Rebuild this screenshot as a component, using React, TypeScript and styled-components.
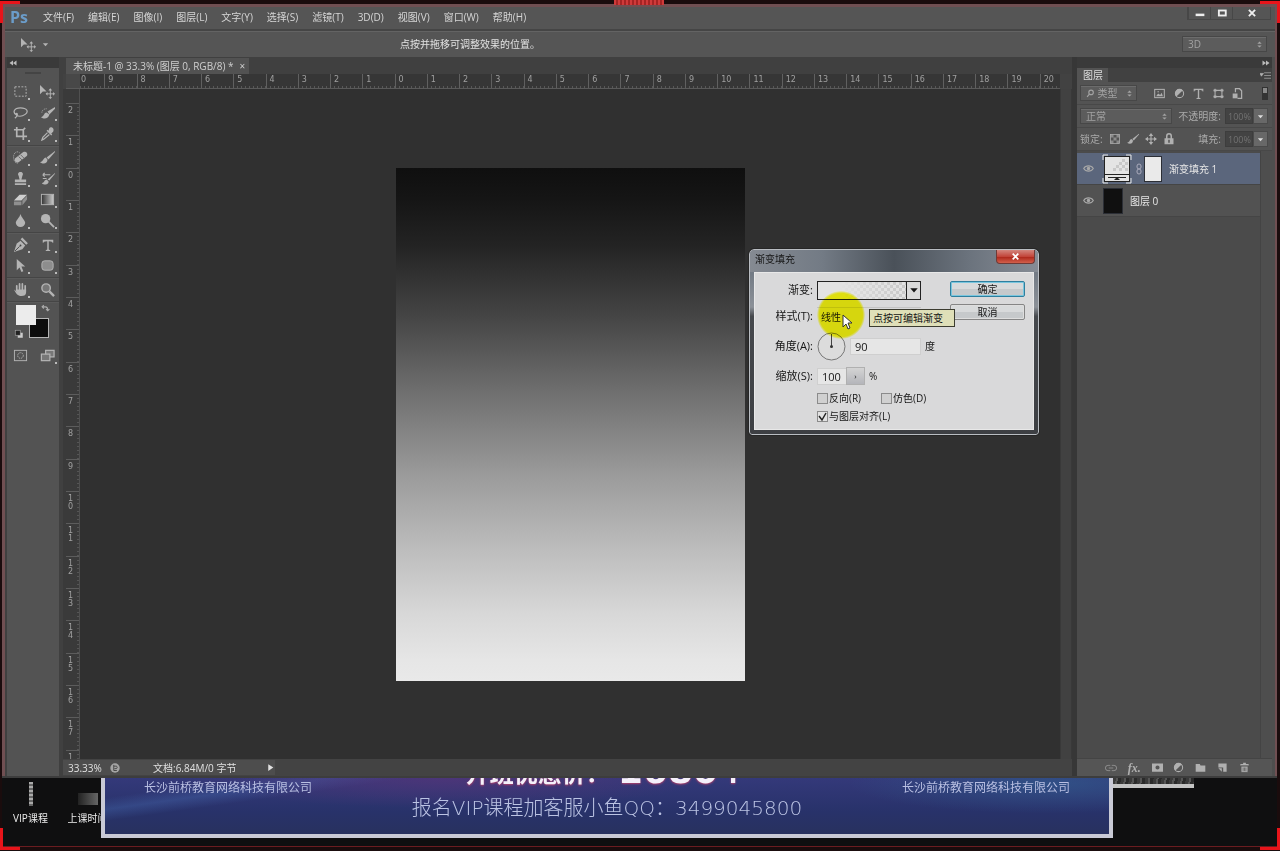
import React from "react";
import styled, { createGlobalStyle } from "styled-components";

const Global = createGlobalStyle`
  *, *::before, *::after { box-sizing: border-box; }
  body { margin: 0; background: #111; }
  button, input, select { font: inherit; color: inherit; margin: 0; padding: 0; border: 0; background: none; border-radius: 0; }
  select { appearance: none; }
  ul { list-style: none; margin: 0; padding: 0; }
  svg { display: block; flex: none; }
`;

/* ---------- frame and application window ---------- */

const Screen = styled.div`
  position: relative;
  display: flex;
  flex-direction: column;
  min-height: 100vh;
  padding: 4px 3px 4px 2px;
  background: #1a0c0d;
  overflow: hidden;
  color: #d6d6d6;
  font: 10px/16px "Open Sans", "Noto Sans CJK SC", sans-serif;
`;

const Corner = styled.span<{ $v: "top" | "bottom"; $h: "left" | "right" }>`
  position: absolute;
  ${(p) => p.$v}: 1px;
  ${(p) => p.$h}: 0;
  width: 20px;
  height: 22px;
  border: 0 solid #e8141a;
  border-${(p) => p.$v}-width: 3px;
  border-${(p) => p.$h}-width: 3px;
  z-index: 5;
`;

const FrameGrip = styled.span`
  position: absolute;
  top: 0;
  left: 48%;
  width: 50px;
  height: 5px;
  background: repeating-linear-gradient(90deg, #cf3a3a 0 2px, #a52424 2px 4px);
  z-index: 5;
`;

const AppWindow = styled.div`
  position: relative;
  flex: 1;
  display: flex;
  flex-direction: column;
  border: solid #704f52;
  border-width: 3px 2px 0 3px;
  background: #535353;
`;

const MenuBar = styled.header`
  display: flex;
  align-items: flex-start;
  height: 22px;
  padding: 0 4px 0 5px;
  background: #555;
`;

const Logo = styled.span`
  width: 33px;
  font: bold 16px/20px "Open Sans", sans-serif;
  color: #6b9cc9;
`;

const Menus = styled.nav`
  display: flex;
  flex: 1;
  gap: 14px;
`;

const MenuButton = styled.button`
  height: 20px;
  white-space: nowrap;
`;

const WindowButtons = styled.div`
  display: flex;
  height: 13px;
  border: 1px solid #474747;
  border-top: 0;
`;

const WindowButton = styled.button<{ $wide?: boolean }>`
  display: flex;
  align-items: center;
  justify-content: center;
  width: ${(p) => (p.$wide ? 38 : 22)}px;
  border-left: 1px solid #474747;
  color: #eee;
`;

const OptionsBar = styled.div`
  display: flex;
  align-items: center;
  height: 28px;
  padding: 0 8px 0 16px;
  border-top: 2px solid #454545;
  box-shadow: inset 0 1px #636363;
  background: #555;
`;

const OptionTool = styled.button`
  display: flex;
  align-items: center;
  gap: 6px;
  width: 379px;
  color: #b4b4b4;
`;

const Hint = styled.span`
  flex: 1;
  color: #e2e2e2;
`;

const SelectWrap = styled.span<{ $grow?: boolean }>`
  position: relative;
  display: flex;
  align-items: center;
  flex: ${(p) => (p.$grow ? "1" : "none")};
  height: 16px;
  padding: 0 3px 0 5px;
  border: 1px solid #474747;
  box-shadow: inset 0 1px #6c6c6c;
  background: #5c5c5c;
  color: #a3a3a3;
`;

const FlatSelect = styled.select<{ $w?: number }>`
  flex: 1;
  width: ${(p) => (p.$w ? p.$w + "px" : "auto")};
  min-width: 0;
  height: 14px;
  line-height: 14px;
  outline: none;
`;

const Workspace = styled.div`
  flex: 1;
  display: flex;
  background: #404040;
  padding-left: 2px;
`;

/* ---------- tool panel ---------- */

const ToolPanel = styled.aside`
  width: 52px;
  background: #535353;
`;

const DockHeader = styled.div<{ $right?: boolean }>`
  display: flex;
  align-items: center;
  justify-content: ${(p) => (p.$right ? "flex-end" : "flex-start")};
  height: 11px;
  padding: 0 2px;
  background: #3a3a3a;
  color: #bbb;
`;

const Grip = styled.div`
  width: 16px;
  height: 2px;
  margin: 4px auto 6px;
  background: #444;
`;

const ToolGroup = styled.div`
  display: grid;
  grid-template-columns: 27px 25px;
  padding: 1px 0;
  border-bottom: 1px solid #454545;
  box-shadow: 0 1px #5a5a5a;
  &:last-of-type { border: 0; box-shadow: none; }
`;

const ToolButton = styled.button<{ $menu?: boolean }>`
  position: relative;
  display: flex;
  align-items: center;
  justify-content: center;
  width: 27px;
  height: 21px;
  color: #b4b4b4;
  &::after {
    content: "";
    display: ${(p) => (p.$menu ? "block" : "none")};
    position: absolute;
    right: 4px;
    bottom: 2px;
    width: 2px;
    height: 2px;
    background: #bbb;
  }
`;

const Swatches = styled.div`
  position: relative;
  height: 40px;
  margin-top: 2px;
  color: #aaa;
`;

const Swatch = styled.button<{ $back?: boolean }>`
  position: absolute;
  left: ${(p) => (p.$back ? 22 : 9)}px;
  top: ${(p) => (p.$back ? 14 : 1)}px;
  width: 20px;
  height: 20px;
  background: ${(p) => (p.$back ? "#0d0d0d" : "#ececec")};
  border: 1px solid ${(p) => (p.$back ? "#b5b5b5" : "#ececec")};
`;

const SwatchAction = styled.button<{ $low?: boolean }>`
  position: absolute;
  left: ${(p) => (p.$low ? 7 : 34)}px;
  top: ${(p) => (p.$low ? 25 : 0)}px;
`;

/* ---------- document ---------- */

const Document = styled.main`
  flex: 1;
  min-width: 0;
  display: flex;
  flex-direction: column;
  margin-left: 4px;
  background: #424242;
`;

const TabBar = styled.div`
  display: flex;
  height: 17px;
  padding: 1px 0 0 3px;
  background: #404040;
`;

const DocTab = styled.div`
  display: flex;
  align-items: center;
  gap: 6px;
  padding: 0 4px 0 7px;
  background: #525252;
  color: #cfcfcf;
  white-space: nowrap;
`;

const TabClose = styled.button`
  line-height: 14px;
`;

const HRuler = styled.div`
  display: flex;
  height: 15px;
  margin: 0 12px 0 3px;
  border-bottom: 1px solid #5a5a5a;
  background: #363636;
  overflow: hidden;
`;

const RulerCorner = styled.div`
  flex: none;
  width: 14px;
  background: #484848;
  z-index: 1;
`;

const HMarks = styled.div`
  flex: none;
  display: grid;
  grid-template-columns: repeat(31, 1fr);
  width: 1000px;
  margin-left: -8px;
`;

const HMark = styled.span`
  padding-left: 3px;
  border-left: 1px solid #606060;
  background: repeating-linear-gradient(90deg, transparent 0 3px, #585858 3px 4px) 0 100% / 100% 2px no-repeat;
  font: 8px/12px "DejaVu Sans", sans-serif;
  color: #a0a0a0;
`;

const DocBody = styled.div`
  flex: 1;
  display: flex;
`;

const VRuler = styled.div`
  position: relative;
  width: 17px;
  border-right: 1px solid #505050;
  background: #3a3a3a;
  overflow: hidden;
`;

const VMarks = styled.div`
  position: absolute;
  inset: 14px 0 auto 3px;
  display: grid;
  grid-template-rows: repeat(21, 1fr);
  height: 679px;
`;

const VMark = styled.span`
  min-width: 100%;
  padding: 3px 5px 0 2px;
  border-top: 1px solid #5c5c5c;
  background: repeating-linear-gradient(180deg, transparent 0 3px, #555 3px 4px) 100% 0 / 2px 100% no-repeat;
  font: 8px/8px "DejaVu Sans", sans-serif;
  color: #a0a0a0;
  word-break: break-all;
`;

const Canvas = styled.div`
  flex: 1;
  display: flex;
  align-items: center;
  justify-content: center;
  background: #303030;
`;

const Artwork = styled.div`
  width: 349px;
  height: 513px;
  background: linear-gradient(#0f0f0f, #151515 6%, #232323 15%, #454545 29%, #707070 44%, #9b9b9b 60%, #bcbcbc 74%, #d8d8d8 87%, #e6e6e6 96%, #e9e9e9);
`;

const Scroller = styled.div`
  width: 12px;
  background: #414141;
  border: solid #393939;
  border-width: 0 1px;
`;

const StatusBar = styled.footer`
  display: flex;
  align-items: center;
  height: 17px;
  background: #434343;
`;

const Status = styled.div`
  display: flex;
  align-items: center;
  width: 212px;
  height: 15px;
  padding-left: 5px;
  background: #4d4d4d;
  color: #e0e0e0;
  line-height: 14px;
`;

const Zoom = styled.input`
  width: 42px;
  height: 14px;
`;

const DocSize = styled.span`
  flex: 1;
  padding-left: 33px;
`;

/* ---------- layers panel ---------- */

const LayersPanel = styled.aside`
  display: flex;
  flex-direction: column;
  width: 203px;
  padding-right: 3px;
  border-left: 5px solid #373737;
  background: #4e4e4e;
  color: #aaa;
`;

const PanelTabs = styled.div`
  display: flex;
  align-items: center;
  justify-content: space-between;
  height: 14px;
  padding-right: 1px;
  background: #414141;
`;

const PanelTab = styled.button`
  height: 14px;
  padding: 0 5px 0 6px;
  background: #535353;
  color: #dedede;
  line-height: 14px;
`;

const PanelRow = styled.div`
  display: flex;
  align-items: center;
  gap: 4px;
  height: 23px;
  padding: 0 4px 0 3px;
  border-bottom: 1px solid #484848;
  background: #535353;
`;

const Filters = styled.div`
  display: flex;
  flex: 1;
  justify-content: space-between;
  padding: 0 15px 0 13px;
`;

const IconButton = styled.button`
  display: flex;
  align-items: center;
  justify-content: center;
  color: #b0b0b0;
`;

const FilterSwitch = styled.button`
  width: 6px;
  height: 13px;
  border: 1px solid #333;
  background: linear-gradient(#888 50%, #333 50%);
`;

const Locks = styled.div`
  display: flex;
  flex: 1;
  gap: 6px;
`;

const Amount = styled.label`
  display: flex;
  align-items: center;
  gap: 4px;
  white-space: nowrap;
`;

const AmountInput = styled.input`
  width: 28px;
  height: 16px;
  padding-left: 2px;
  background: #434343;
  border: 1px solid #3d3d3d;
  color: #727272;
  font: 9px/14px "Open Sans", sans-serif;
`;

const AmountDrop = styled.button`
  display: flex;
  align-items: center;
  justify-content: center;
  width: 15px;
  height: 16px;
  margin-left: -4px;
  background: #686868;
  border: 1px solid #4a4a4a;
  color: #ddd;
`;

const LayerList = styled.ul`
  flex: 1;
  margin-right: 11px;
  padding-top: 2px;
  border-right: 1px solid #444;
  background: #4b4b4b;
`;

const Layer = styled.li<{ $selected?: boolean }>`
  display: flex;
  align-items: center;
  height: 32px;
  border-bottom: 1px solid #454545;
  background: ${(p) => (p.$selected ? "#5b667c" : "#525252")};
  color: #e6e6e6;
  & > svg { margin: 0 2px; }
`;

const EyeButton = styled(IconButton)`
  width: 23px;
  height: 31px;
  color: #a8a8a8;
`;

const Thumb = styled.span<{ $mask?: boolean }>`
  width: ${(p) => (p.$mask ? 18 : 20)}px;
  height: 26px;
  margin-left: ${(p) => (p.$mask ? 0 : 3)}px;
  background: ${(p) => (p.$mask ? "#eaeaea" : "#101010")};
  border: 1px solid #2c2f36;
`;

const LayerName = styled.span`
  padding-left: 7px;
`;

const PanelFooter = styled.footer`
  display: flex;
  align-items: center;
  justify-content: space-between;
  height: 18px;
  padding: 0 22px 0 28px;
  border-top: 1px solid #444;
  background: #555;
`;

/* ---------- gradient dialog ---------- */

const Dialog = styled.section`
  position: absolute;
  left: 744px;
  top: 242px;
  width: 290px;
  height: 186px;
  padding: 0 4px 4px;
  border: 1px solid #b9bdc2;
  border-radius: 5px 5px 3px 3px;
  outline: 1px solid #262626;
  background: linear-gradient(180deg, #8b9098 0, #727a84 12%, #8c9198 31%, #46494d 36%, #3d3f43 100%);
  color: #161616;
`;

const DialogHead = styled.header`
  display: flex;
  justify-content: space-between;
  height: 22px;
  margin: 0 -4px;
  padding: 0 3px 0 5px;
  border-radius: 4px 4px 0 0;
  background: linear-gradient(90deg, #858a92 0, #737b85 25%, #4a5159 50%, #6b737d 76%, #868c95 100%);
  line-height: 19px;
`;

const CloseButton = styled.button`
  display: flex;
  align-items: center;
  justify-content: center;
  width: 39px;
  height: 14px;
  border: 1px solid #6f3a36;
  border-top: 0;
  border-radius: 0 0 4px 4px;
  background: linear-gradient(#d3867e, #c2453a 50%, #ab2418 51%, #d2604c);
  color: #fff;
`;

const DialogBody = styled.form`
  display: flex;
  height: 158px;
  padding: 7px 8px 0 0;
  border: 1px solid #e8e8e8;
  background: #d9d9da;
`;

const Fields = styled.div`
  flex: 1;
  display: grid;
  grid-template-columns: 58px 1fr;
  grid-template-rows: 20px 20px 28px 20px 12px 12px;
  gap: 6px 4px;
  align-items: center;
`;

const FieldLabel = styled.label`
  font-size: 11px;
  text-align: right;
  white-space: nowrap;
`;

const Field = styled.div`
  grid-column: 2;
  display: flex;
  align-items: center;
  gap: 4px;
  white-space: nowrap;
`;

const GradientPicker = styled.button`
  display: flex;
  width: 104px;
  height: 19px;
  border: 1px solid #222;
  background:
    linear-gradient(90deg, #e2e2e2 20%, rgba(226, 226, 226, 0.3) 100%),
    repeating-conic-gradient(#b4b4b4 0 25%, #e2e2e2 0 50%) 0 0 / 6px 6px;
`;

const PickerArrow = styled.span`
  display: flex;
  align-items: center;
  justify-content: center;
  width: 14px;
  height: 17px;
  margin-left: auto;
  border-left: 1px solid #222;
  background: #dadada;
`;

const StyleSelect = styled.select`
  width: 104px;
  height: 18px;
  padding-left: 4px;
  border-top: 1px solid #c3c3c3;
`;

const NumberInput = styled.input<{ $w: number }>`
  width: ${(p) => p.$w}px;
  height: 17px;
  padding-left: 4px;
  border: 1px solid #cfcfcf;
  background: #e6e6e6;
  font-size: 11px;
`;

const StepButton = styled.button`
  width: 19px;
  height: 18px;
  margin-left: -5px;
  border: 1px solid #b0b0b0;
  background: linear-gradient(#d4d4d4, #b4b5ba);
  font-size: 8px;
  line-height: 14px;
`;

const Check = styled.label`
  display: flex;
  align-items: center;
  gap: 1px;
  margin-right: 16px;
`;

const CheckBox = styled.input`
  appearance: none;
  width: 11px;
  height: 11px;
  border: 1px solid #8b8b8b;
  background: #d0d0d0;
  &:checked { background: #e2e2e2; }
`;

const CheckMark = styled.svg`
  margin-left: -12px;
  pointer-events: none;
`;

const Actions = styled.div`
  display: flex;
  flex-direction: column;
  gap: 7px;
  width: 75px;
  padding-top: 1px;
`;

const ActionButton = styled.button<{ $primary?: boolean }>`
  height: 16px;
  border: 1px solid ${(p) => (p.$primary ? "#2f7f9e" : "#858585")};
  box-shadow: inset 0 0 0 1px ${(p) => (p.$primary ? "#79c6de" : "#dedede")};
  border-radius: 2px;
  background: linear-gradient(#d8dadb 50%, #c6c9cb 51%);
  line-height: 14px;
`;

const ClickHalo = styled.span`
  position: absolute;
  left: 67px;
  top: 41px;
  width: 48px;
  height: 48px;
  border-radius: 50%;
  background: radial-gradient(circle, #fcfc10 60%, #fcfc18 64%, transparent 72%);
  mix-blend-mode: multiply;
  pointer-events: none;
`;

const Tooltip = styled.span`
  position: absolute;
  left: 119px;
  top: 59px;
  width: 86px;
  height: 18px;
  padding-left: 3px;
  border: 1px solid #3c3c30;
  background: #dfdfb8;
  line-height: 16px;
`;

const Pointer = styled.svg`
  position: absolute;
  left: 92px;
  top: 64px;
`;

/* ---------- desktop strip ---------- */

const Desktop = styled.div`
  display: flex;
  align-items: flex-start;
  height: 71px;
  border-top: 2px solid #3d3d3d;
  border-bottom: 1px solid #6b1c20;
  background: #0f0f10;
`;

const Shortcuts = styled.div`
  display: flex;
  width: 99px;
  overflow: hidden;
`;

const Shortcut = styled.a`
  flex: none;
  display: flex;
  flex-direction: column;
  align-items: center;
  width: 57px;
  padding-top: 4px;
  color: #ececec;
  text-decoration: none;
  white-space: nowrap;
`;

const ShortcutArt = styled.span<{ $wide?: boolean }>`
  width: ${(p) => (p.$wide ? 20 : 4)}px;
  height: ${(p) => (p.$wide ? 12 : 24)}px;
  margin: ${(p) => (p.$wide ? "11px 0 5px" : "0 0 4px")};
  background: ${(p) => (p.$wide ? "linear-gradient(90deg, #222, #666)" : "repeating-linear-gradient(#aaa 0 2px, #666 2px 4px)")};
`;

const Banner = styled.section`
  flex: 1;
  display: grid;
  grid-template-columns: 1fr auto 1fr;
  height: 60px;
  padding: 0 39px;
  border: solid #c9cad6;
  border-width: 0 4px 4px;
  background:
    radial-gradient(ellipse 260px 30px at 34% 0, rgba(86, 52, 120, 0.7), transparent),
    linear-gradient(172deg, transparent 10%, rgba(72, 110, 180, 0.35) 16%, transparent 22%),
    radial-gradient(ellipse 200px 30px at 94% 10%, rgba(48, 90, 140, 0.7), transparent),
    linear-gradient(#34397a, #28326a 60%, #28315f);
  overflow: hidden;
  color: #b9bfe2;
`;

const Company = styled.span<{ $end?: boolean }>`
  font-size: 12px;
  line-height: 19px;
  text-align: ${(p) => (p.$end ? "right" : "left")};
`;

const Offer = styled.div`
  height: 56px;
  display: flex;
  flex-direction: column;
  justify-content: flex-end;
  align-items: center;
`;

const Price = styled.strong`
  display: flex;
  align-items: flex-end;
  gap: 8px;
  height: 38px;
  color: #f4f0fa;
  text-shadow: 0 1px 2px #b4406a;
  font-size: 24px;
  line-height: 38px;
`;

const PriceValue = styled.span`
  font: bold 36px/42px "DejaVu Sans", sans-serif;
`;

const Contact = styled.span`
  font: 200 20px/24px "DejaVu Sans Light", "DejaVu Sans", "Noto Sans CJK SC", sans-serif;
  padding: 4px 0 14px;
  color: #bcc4e4;
  white-space: nowrap;
`;

const Beyond = styled.div`
  width: 164px;
`;

const Filmstrip = styled.div`
  width: 81px;
  height: 10px;
  border-bottom: 4px solid #c4c4c4;
  background: repeating-linear-gradient(100deg, #3a3a3a 0 3px, #555 3px 5px, #2a2a2a 5px 8px);
`;

/* ---------- icons ---------- */

type IconProps = { name: string; size?: number };

const shapes: Record<string, React.ReactNode> = {
  marquee: <rect x="2" y="3" width="12" height="10" fill="none" stroke="currentColor" strokeDasharray="2 1.5" />,
  move: (
    <>
      <path d="M0 1v10l3-3h4z" fill="currentColor" />
      <path d="M11 6v9M7 10.500h8" stroke="currentColor" />
      <path d="M11 4.500l2 2.500h-4zM11 16l2-2h-4zM6 10.500l2-2v4zM16 10.500l-2-2v4z" fill="currentColor" />
    </>
  ),
  lasso: (
    <path d="M4 11C-1 8 1 3 8 3s9 4 5 7-8 2-9 1-1-2 0-2 1 3-2 5" fill="none" stroke="currentColor" strokeWidth="1.3" />
  ),
  quick: (
    <>
      <path d="M16 2L8 7l2 3 6-6z" fill="currentColor" />
      <path d="M7 8c-3 0-2 4-6 5 4 3 8 1 9-3z" fill="currentColor" />
      <path d="M2 8a5 4 0 0 1 5-4" fill="none" stroke="currentColor" strokeDasharray="1 1" />
    </>
  ),
  crop: <path d="M4 1v10h11M1 4h10v11M11 4l2-2" fill="none" stroke="currentColor" strokeWidth="1.8" />,
  dropper: (
    <>
      <path d="M10 2c2-2 6 1 4 4l-2 2 1 1-1 1-5-5 1-1 1 1z" fill="currentColor" />
      <path d="M8 7l-5 5-1 3 2-1 6-5" fill="none" stroke="currentColor" strokeWidth="1.300" />
    </>
  ),
  heal: (
    <>
      <path d="M11 2c3-1 5 1 4 4l-9 7c-3 1-5-1-4-4z" fill="currentColor" />
      <path d="M6 7l4 4M8 5l4 4" stroke="#666" />
      <path d="M5 14C1 14 0 8 1 5s4-4 6-2" fill="none" stroke="currentColor" strokeDasharray="1 1" />
    </>
  ),
  brush: (
    <>
      <path d="M16 1L7 8l2 2 7-8z" fill="currentColor" />
      <path d="M6 8c-3 1-2 4-6 5 4 3 8 1 8-3z" fill="currentColor" />
    </>
  ),
  stamp: (
    <path d="M8 1c3 0 3 3 2 4l-1 4h5v3H2V9h5L6 5c-1-1-1-4 2-4zM2 13h12v2H2z" fill="currentColor" />
  ),
  history: (
    <>
      <path d="M16 2L8 9l2 1 6-7zM7 9c-3 1-2 3-5 4 3 3 8 1 7-2z" fill="currentColor" />
      <path d="M3 4h8M3 4l2-2M3 4l2 2M3 8h4" fill="none" stroke="currentColor" strokeWidth="1.300" />
    </>
  ),
  eraser: (
    <>
      <path d="M7 3h8L9 9H1z" fill="#cfcfcf" />
      <path d="M1 10h8v4H1zM10 9l5-5v4l-5 6z" fill="#8f8f8f" />
    </>
  ),
  blur: <path d="M8 1c1 4 5 7 5 9.500a5 4.500 0 0 1-10 0C3 8 7 5 8 1z" fill="currentColor" />,
  dodge: (
    <>
      <circle cx="6" cy="6" r="5" fill="currentColor" />
      <path d="M9 9l6 6" stroke="currentColor" strokeWidth="2" />
    </>
  ),
  pen: (
    <>
      <path d="M8 4l5 5-3 4-9 3 3-9z" fill="currentColor" />
      <path d="M9 1.500l6 6" stroke="currentColor" strokeWidth="2.500" />
      <path d="M2 15l5-5" stroke="#444" />
      <circle cx="8" cy="9" r="1" fill="#444" />
    </>
  ),
  type: <path d="M1 1h14v4h-1c0-1-1-2-5-2v11l2 1v1H5v-1l2-1V3C3 3 2 4 2 5H1z" fill="currentColor" />,
  select: <path d="M4 1v12l3-3 2 5 2-1-2-5h4z" fill="currentColor" />,
  shape: <rect x="2" y="3" width="12" height="10" rx="3" fill="#8d8d8d" stroke="currentColor" />,
  hand: (
    <>
      <path d="M4 9V4M7 8V2M10 8V2M13 9V4" stroke="currentColor" strokeWidth="1.800" strokeLinecap="round" />
      <path d="M1 8l3 2V8h10v3c0 3-2 4-5 4-4 0-6-3-8-7z" fill="currentColor" />
    </>
  ),
  zoom: (
    <>
      <circle cx="6.500" cy="6.500" r="4.500" fill="#777" stroke="currentColor" strokeWidth="1.500" />
      <path d="M10 10l5 5" stroke="currentColor" strokeWidth="2.500" />
    </>
  ),
  quickmask: (
    <>
      <rect x="1.500" y="2.500" width="13" height="11" fill="none" stroke="currentColor" />
      <circle cx="8" cy="8" r="3" fill="none" stroke="currentColor" strokeDasharray="1.5 1" />
    </>
  ),
  screens: (
    <>
      <rect x="6" y="2.500" width="9" height="7" fill="#777" stroke="currentColor" strokeWidth="1.300" />
      <rect x="1.500" y="6.500" width="9" height="7" fill="#777" stroke="currentColor" strokeWidth="1.300" />
    </>
  ),
  swap: <path d="M3 5h5c3 0 4 1 4 6M5 2L2 5l3 3M9 9l3 3 3-3" fill="none" stroke="currentColor" strokeWidth="2" />,
  defaults: (
    <>
      <rect x="6" y="6" width="8" height="8" fill="#ccc" />
      <rect x="2" y="2" width="8" height="8" fill="#222" stroke="#aaa" />
    </>
  ),
  down: <path d="M2 5h12l-6 7z" fill="currentColor" />,
  updown: <path d="M3 6h10L8 1zM3 10h10l-5 5z" fill="currentColor" />,
  left: <path d="M8 3v10L1 8zM15 3v10L8 8z" fill="currentColor" />,
  right: <path d="M1 3v10l7-5zM8 3v10l7-5z" fill="currentColor" />,
  panel: <path d="M0 5h5L2 9zM6 4h10M6 8h10M6 12h10" fill="currentColor" stroke="currentColor" />,
  min: <path d="M1 11h14" stroke="currentColor" strokeWidth="4" />,
  max: <rect x="3" y="4" width="11" height="8" fill="none" stroke="currentColor" strokeWidth="3" />,
  close: <path d="M3 3l10 10M13 3L3 13" stroke="currentColor" strokeWidth="3" />,
  search: (
    <>
      <circle cx="9" cy="6" r="4" fill="none" stroke="currentColor" strokeWidth="2" />
      <path d="M6 9l-4 5" stroke="currentColor" strokeWidth="2" />
    </>
  ),
  image: (
    <>
      <rect x="1" y="2" width="14" height="12" fill="none" stroke="currentColor" strokeWidth="1.500" />
      <path d="M3 12l3-4 3 2 2-3 2 5z" fill="currentColor" />
      <circle cx="6" cy="5.500" r="1" fill="currentColor" />
    </>
  ),
  adjust: (
    <>
      <circle cx="8" cy="8" r="6" fill="none" stroke="currentColor" strokeWidth="1.500" />
      <path d="M12.500 3.500A6 6 0 1 0 3.500 12.500z" fill="currentColor" />
    </>
  ),
  vector: (
    <>
      <path d="M3 1v14M13 1v14M1 3.500h14M1 12.500h14" stroke="currentColor" strokeWidth="1.600" />
      <path d="M1 2h4v3H1zM11 2h4v3h-4zM1 11h4v3H1zM11 11h4v3h-4z" fill="currentColor" />
    </>
  ),
  smart: (
    <>
      <path d="M5 6V1h6l3 3v11H8" fill="none" stroke="currentColor" strokeWidth="1.800" />
      <path d="M1 8h7v7H1z" fill="currentColor" />
    </>
  ),
  pixels: (
    <>
      <rect x="2" y="2" width="12" height="12" fill="none" stroke="currentColor" />
      <path d="M2 2h4v4H2zM10 2h4v4h-4zM6 6h4v4H6zM2 10h4v4H2zM10 10h4v4h-4z" fill="currentColor" opacity="0.6" />
    </>
  ),
  cross: (
    <>
      <path d="M8 2v12M2 8h12" stroke="currentColor" strokeWidth="1.500" />
      <path d="M8 0l3 4H5zM8 16l3-4H5zM0 8l4-3v6zM16 8l-4-3v6z" fill="currentColor" />
    </>
  ),
  lock: (
    <>
      <path d="M5 8V4a3 3 0 0 1 6 0v4" fill="none" stroke="currentColor" strokeWidth="2" />
      <path d="M2 7h12v8H2zM7 9v4h2V9z" fill="currentColor" fillRule="evenodd" />
    </>
  ),
  eye: (
    <>
      <path d="M1 8c3-5 11-5 14 0-3 5-11 5-14 0z" fill="none" stroke="currentColor" strokeWidth="1.600" />
      <circle cx="8" cy="8" r="2.500" fill="currentColor" />
    </>
  ),
  chain: (
    <path d="M7 4.500H4a3.500 3.500 0 0 0 0 7h3M9 4.500h3a3.500 3.500 0 0 1 0 7H9M5 8h6" fill="none" stroke="currentColor" strokeWidth="1.300" opacity="0.6" />
  ),
  mask: <path d="M0 2h16v12H0zM8 5a3 3 0 1 0 0 6 3 3 0 0 0 0-6z" fill="currentColor" fillRule="evenodd" />,
  folder: <path d="M1 3h6l1 2h7v9H1z" fill="currentColor" />,
  page: <path d="M2 2h12v12H9V8H2zM2 9h5v5z" fill="currentColor" />,
  trash: (
    <>
      <path d="M2 4h12M6 2h4" stroke="currentColor" strokeWidth="2" />
      <path d="M3 6h10v9H3zM6 8v5M8 8v5M10 8v5" fill="currentColor" stroke="#555" />
    </>
  ),
  badge: (
    <>
      <circle cx="8" cy="8" r="7.500" fill="#a5a5a5" />
      <path d="M6 5h4c2 0 2 4 0 4H7M6 3v9h5" stroke="#444" strokeWidth="1.500" fill="none" />
    </>
  ),
  play: <path d="M4 2v12l9-6z" fill="currentColor" />,
};

const Icon = ({ name, size = 16 }: IconProps) => (
  <svg width={size} height={size} viewBox="0 0 16 16" aria-hidden="true">
    {name === "gradient" ? (
      <>
        <linearGradient id="toolGradient">
          <stop offset="0" stopColor="#333" />
          <stop offset="1" stopColor="#ccc" />
        </linearGradient>
        <rect x="1.500" y="2.500" width="13" height="11" fill="url(#toolGradient)" stroke="currentColor" />
      </>
    ) : (
      shapes[name]
    )}
  </svg>
);

const FillThumb = () => (
  <svg width="30" height="30" viewBox="0 0 30 30" aria-hidden="true">
    <path d="M1 6V1h5M24 1h5v5M29 24v5h-5M6 29H1v-5" fill="none" stroke="#e8e8e8" />
    <rect x="2.500" y="2.500" width="25" height="25" fill="#e4e4e4" stroke="#222" />
    <g fill="#c8c8c8">
      <path d="M20 5h3v3h-3zM23 8h3v3h-3zM17 8h3v3h-3zM20 11h3v3h-3zM14 11h3v3h-3zM23 14h3v3h-3zM17 14h3v3h-3zM11 14h3v3h-3z" />
    </g>
    <path d="M3 20.500h24M6 23.500h18" stroke="#222" />
    <path d="M15 23l3 3h-6z" fill="#222" />
  </svg>
);

/* ---------- content ---------- */

const menus = ["文件(F)", "编辑(E)", "图像(I)", "图层(L)", "文字(Y)", "选择(S)", "滤镜(T)", "3D(D)", "视图(V)", "窗口(W)", "帮助(H)"];

const toolGroups: [string, string][][] = [
  [["marquee", "矩形选框"], ["move", "移动"], ["lasso", "套索"], ["quick", "快速选择"], ["crop", "裁剪"], ["dropper", "吸管"]],
  [["heal", "修复画笔"], ["brush", "画笔"], ["stamp", "仿制图章"], ["history", "历史记录画笔"], ["eraser", "橡皮擦"], ["gradient", "渐变"], ["blur", "模糊"], ["dodge", "减淡"]],
  [["pen", "钢笔"], ["type", "文字"], ["select", "路径选择"], ["shape", "形状"]],
  [["hand", "抓手"], ["zoom", "缩放"]],
];
const plainTools = ["move", "zoom", "quickmask"];

const across = Array.from({ length: 31 }, (_, i) => Math.abs(i - 10));
const down = Array.from({ length: 21 }, (_, i) => Math.abs(i - 2));

const Tool = ({ name, label }: { name: string; label: string }) => (
  <ToolButton aria-label={label} $menu={!plainTools.includes(name)}>
    <Icon name={name} size={name === "type" ? 12 : 15} />
  </ToolButton>
);

const GradientDialog = () => (
  <Dialog role="dialog" aria-labelledby="dlg-title">
    <DialogHead>
      <span id="dlg-title">渐变填充</span>
      <CloseButton aria-label="关闭"><Icon name="close" size={9} /></CloseButton>
    </DialogHead>
    <DialogBody onSubmit={(e) => e.preventDefault()}>
      <Fields>
        <FieldLabel htmlFor="gradient">渐变:</FieldLabel>
        <Field>
          <GradientPicker id="gradient" type="button">
            <PickerArrow><Icon name="down" size={10} /></PickerArrow>
          </GradientPicker>
        </Field>
        <FieldLabel htmlFor="style">样式(T):</FieldLabel>
        <Field>
          <StyleSelect id="style"><option>线性</option></StyleSelect>
        </Field>
        <FieldLabel htmlFor="angle">角度(A):</FieldLabel>
        <Field>
          <svg width="29" height="29" viewBox="0 0 29 29" aria-hidden="true">
            <circle cx="14.500" cy="14.500" r="13.500" fill="#dcdcdc" stroke="#777" />
            <path d="M14.500 2v12" stroke="#444" />
            <circle cx="14.500" cy="14.500" r="1.500" fill="#333" />
          </svg>
          <NumberInput id="angle" $w={71} defaultValue="90" />
          <span>度</span>
        </Field>
        <FieldLabel htmlFor="scale">缩放(S):</FieldLabel>
        <Field>
          <NumberInput id="scale" $w={30} defaultValue="100" />
          <StepButton type="button" aria-label="缩放滑块">›</StepButton>
          <span>%</span>
        </Field>
        <Field>
          <Check><CheckBox type="checkbox" />反向(R)</Check>
          <Check><CheckBox type="checkbox" />仿色(D)</Check>
        </Field>
        <Field>
          <Check>
            <CheckBox type="checkbox" defaultChecked />
            <CheckMark width="11" height="11" viewBox="0 0 11 11">
              <path d="M2 5l3 4 4-7" fill="none" stroke="#222" strokeWidth="1.500" />
            </CheckMark>
            与图层对齐(L)
          </Check>
        </Field>
      </Fields>
      <Actions>
        <ActionButton $primary>确定</ActionButton>
        <ActionButton type="button">取消</ActionButton>
      </Actions>
    </DialogBody>
    <ClickHalo />
    <Tooltip role="tooltip">点按可编辑渐变</Tooltip>
    <Pointer width="12" height="16" viewBox="0 0 12 16">
      <path d="M1 1v12l3-3 2 5 2-1-2-5h4z" fill="#fff" stroke="#333" />
    </Pointer>
  </Dialog>
);

const footerIcons: [string, string][] = [
  ["mask", "添加蒙版"], ["adjust", "调整图层"], ["folder", "新建组"], ["page", "新建图层"], ["trash", "删除图层"],
];

const FxButton = styled(IconButton)`
  font: italic bold 12px/12px "Liberation Serif", serif;
`;

export default function App() {
  return (
    <Screen>
      <Global />
      <Corner $v="top" $h="left" />
      <Corner $v="top" $h="right" />
      <Corner $v="bottom" $h="left" />
      <Corner $v="bottom" $h="right" />
      <FrameGrip />
      <AppWindow>
        <MenuBar>
          <Logo>Ps</Logo>
          <Menus>{menus.map((m) => <MenuButton key={m}>{m}</MenuButton>)}</Menus>
          <WindowButtons>
            <WindowButton aria-label="最小化"><Icon name="min" size={10} /></WindowButton>
            <WindowButton aria-label="最大化"><Icon name="max" size={10} /></WindowButton>
            <WindowButton aria-label="关闭" $wide><Icon name="close" size={10} /></WindowButton>
          </WindowButtons>
        </MenuBar>

        <OptionsBar>
          <OptionTool aria-label="移动工具"><Icon name="move" size={15} /><Icon name="down" size={7} /></OptionTool>
          <Hint>点按并拖移可调整效果的位置。</Hint>
          <SelectWrap>
            <FlatSelect $w={68} aria-label="工作区"><option>3D</option></FlatSelect>
            <Icon name="updown" size={7} />
          </SelectWrap>
        </OptionsBar>

        <Workspace>
          <ToolPanel>
            <DockHeader><Icon name="left" size={8} /></DockHeader>
            <Grip />
            {toolGroups.map((group) => (
              <ToolGroup key={group[0][0]}>
                {group.map(([name, label]) => <Tool key={name} name={name} label={label} />)}
              </ToolGroup>
            ))}
            <Swatches>
              <Swatch $back aria-label="背景色" />
              <Swatch aria-label="前景色" />
              <SwatchAction aria-label="切换颜色"><Icon name="swap" size={9} /></SwatchAction>
              <SwatchAction $low aria-label="默认颜色"><Icon name="defaults" size={10} /></SwatchAction>
            </Swatches>
            <ToolGroup>
              <Tool name="quickmask" label="快速蒙版" />
              <Tool name="screens" label="屏幕模式" />
            </ToolGroup>
          </ToolPanel>

          <Document>
            <TabBar>
              <DocTab>
                <span>未标题-1 @ 33.3% (图层 0, RGB/8) *</span>
                <TabClose aria-label="关闭文档">×</TabClose>
              </DocTab>
            </TabBar>
            <HRuler>
              <RulerCorner />
              <HMarks>{across.map((n, i) => <HMark key={i}>{i === 0 ? <>&nbsp;&nbsp;0</> : n}</HMark>)}</HMarks>
            </HRuler>
            <DocBody>
              <VRuler>
                <VMarks>{down.map((n, i) => <VMark key={i}>{n}</VMark>)}</VMarks>
              </VRuler>
              <Canvas><Artwork /></Canvas>
              <Scroller />
            </DocBody>
            <StatusBar>
              <Status>
                <Zoom aria-label="缩放比例" defaultValue="33.33%" />
                <Icon name="badge" size={10} />
                <DocSize>文档:6.84M/0 字节</DocSize>
                <Icon name="play" size={9} />
              </Status>
            </StatusBar>
          </Document>

          <LayersPanel>
            <DockHeader $right><Icon name="right" size={8} /></DockHeader>
            <PanelTabs>
              <PanelTab>图层</PanelTab>
              <IconButton aria-label="面板菜单"><Icon name="panel" size={11} /></IconButton>
            </PanelTabs>
            <PanelRow>
              <SelectWrap>
                <Icon name="search" size={9} />
                <FlatSelect $w={31} aria-label="图层过滤"><option>&nbsp;类型</option></FlatSelect>
                <Icon name="updown" size={7} />
              </SelectWrap>
              <Filters>
                {[["image", "像素"], ["adjust", "调整"], ["type", "文字"], ["vector", "形状"], ["smart", "智能对象"]].map(([n, l]) => (
                  <IconButton key={n} aria-label={l}><Icon name={n} size={11} /></IconButton>
                ))}
              </Filters>
              <FilterSwitch aria-label="过滤开关" />
            </PanelRow>
            <PanelRow>
              <SelectWrap $grow>
                <FlatSelect aria-label="混合模式"><option>正常</option></FlatSelect>
                <Icon name="updown" size={7} />
              </SelectWrap>
              <Amount>&nbsp;不透明度:<AmountInput defaultValue="100%" /></Amount>
              <AmountDrop aria-label="不透明度滑块"><Icon name="down" size={7} /></AmountDrop>
            </PanelRow>
            <PanelRow>
              <Locks>
                <span>锁定:</span>
                {[["pixels", "锁定透明像素"], ["brush", "锁定图像像素"], ["cross", "锁定位置"], ["lock", "锁定全部"]].map(([n, l]) => (
                  <IconButton key={n} aria-label={l}><Icon name={n} size={12} /></IconButton>
                ))}
              </Locks>
              <Amount>填充:<AmountInput defaultValue="100%" /></Amount>
              <AmountDrop aria-label="填充滑块"><Icon name="down" size={7} /></AmountDrop>
            </PanelRow>
            <LayerList>
              <Layer $selected>
                <EyeButton aria-label="显示图层"><Icon name="eye" size={11} /></EyeButton>
                <FillThumb />
                <svg width="6" height="12" viewBox="0 0 6 12" aria-hidden="true">
                  <rect x="1" y="1" width="4" height="5" rx="2" fill="none" stroke="#aab" />
                  <rect x="1" y="6" width="4" height="5" rx="2" fill="none" stroke="#aab" />
                </svg>
                <Thumb $mask />
                <LayerName>渐变填充 1</LayerName>
              </Layer>
              <Layer>
                <EyeButton aria-label="显示图层"><Icon name="eye" size={11} /></EyeButton>
                <Thumb />
                <LayerName>图层 0</LayerName>
              </Layer>
            </LayerList>
            <PanelFooter>
              <IconButton aria-label="链接图层"><Icon name="chain" size={12} /></IconButton>
              <FxButton>fx.</FxButton>
              {footerIcons.map(([n, l]) => (
                <IconButton key={n} aria-label={l}><Icon name={n} size={11} /></IconButton>
              ))}
            </PanelFooter>
          </LayersPanel>
        </Workspace>

        <GradientDialog />
      </AppWindow>

      <Desktop>
        <Shortcuts>
          <Shortcut href="#vip"><ShortcutArt />VIP课程</Shortcut>
          <Shortcut href="#time"><ShortcutArt $wide />上课时间</Shortcut>
        </Shortcuts>
        <Banner>
          <Company>长沙前桥教育网络科技有限公司</Company>
          <Offer>
            <Price>开班优惠价：<PriceValue>1680+</PriceValue></Price>
            <Contact>报名VIP课程加客服小鱼QQ：3499045800</Contact>
          </Offer>
          <Company $end>长沙前桥教育网络科技有限公司</Company>
        </Banner>
        <Beyond><Filmstrip /></Beyond>
      </Desktop>
    </Screen>
  );
}
